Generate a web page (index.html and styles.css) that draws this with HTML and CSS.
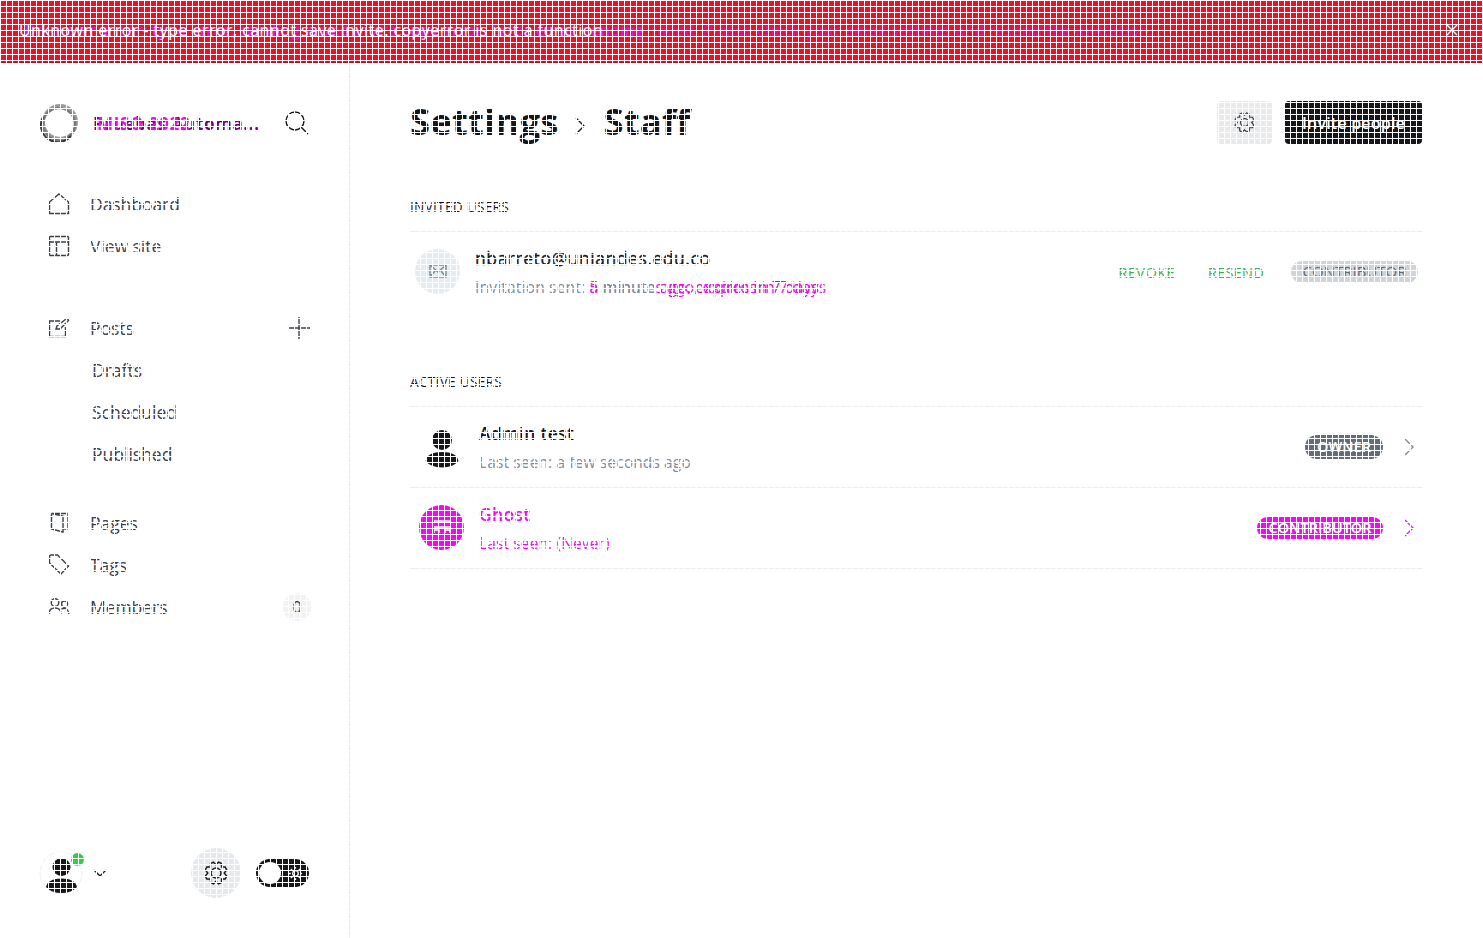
FILE: index.html
```html
<!DOCTYPE html>
<html lang="en">
<head>
<meta charset="utf-8">
<title>Settings - Staff</title>
<link rel="stylesheet" href="styles.css">
</head>
<body>
<div class="banner">
  <div class="banner-text">
    <span class="layer pink"><span class="lead">Unknown error: type error, sending saved invite copy error. Error email sending</span><span class="tail">failed. Please check your email settings and resend the invitation.</span></span>
    <span class="layer white">Unknown error - type error, cannot save invite. copyerror is not a function</span>
  </div>
  <svg class="banner-close" viewBox="0 0 12 12"><path d="M1 1l10 10M11 1L1 11"/></svg>
</div>
<div class="app">
  <aside class="sidebar">
    <header class="site">
      <svg class="site-logo" viewBox="0 0 38 38"><circle cx="20" cy="18" r="16.500" stroke="#999c9e" stroke-width="3"/><circle cx="19" cy="20" r="16" stroke="#777a7c" stroke-width="2.500"/><path d="M3 13a17 17 0 0 0 28 19" stroke="#333638" stroke-width="2"/></svg>
      <div class="site-name"><span class="layer name-a">Pruebas Automa...</span><span class="layer name-b">MISO 2022</span></div>
      <svg class="search" viewBox="0 0 24 24"><circle cx="10" cy="10" r="9"/><path d="M16.500 16.500L23 23"/></svg>
    </header>
    <nav>
      <div class="nav-group">
        <a class="nav-item"><svg viewBox="0 0 22 22"><path d="M1.500 9L11 1l9.500 8v11.500h-19z"/></svg>Dashboard</a>
        <a class="nav-item"><svg viewBox="0 0 22 22"><rect x="1.500" y="1.500" width="19" height="19" rx="1"/><path d="M1.500 7h19M8.500 7v13.500"/></svg>View site</a>
      </div>
      <div class="nav-group posts">
        <a class="nav-item"><svg viewBox="0 0 22 22"><path d="M12 4H1.500v15.500h16V10M8 12l1-3 9-7q2-1 2.500 1.500L12 12z"/></svg>Posts<svg class="plus" viewBox="0 0 22 22"><path d="M11 0v22M0 11h22"/></svg></a>
        <a class="nav-item sub">Drafts</a>
        <a class="nav-item sub">Scheduled</a>
        <a class="nav-item sub">Published</a>
      </div>
      <div class="nav-group">
        <a class="nav-item"><svg viewBox="0 0 22 22"><path d="M3.500 1.500h15.500v15.500h-3.500M3.500 1.500v15.500l11.500 3V4L3.500 1.500"/></svg>Pages</a>
        <a class="nav-item"><svg viewBox="0 0 22 22"><path d="M1.500 2.500q0-1.500 1.500-1.500h6.500l11 11-7.500 8L1.500 9z"/></svg>Tags</a>
        <a class="nav-item"><svg viewBox="0 0 22 22"><circle cx="7" cy="6.500" r="3.800"/><circle cx="16.500" cy="8" r="3"/><path d="M1 18q0-6 6-6t6 6M13.500 13q6-3 7.500 5"/></svg>Members<span class="count">0</span></a>
      </div>
    </nav>
    <footer class="side-foot">
      <div class="me"><svg viewBox="0 0 44 44"><circle class="ring" cx="22" cy="22" r="21"/><circle cx="22.500" cy="16" r="9"/><path d="M7 36q2-8.500 15.500-8.500T38 36q-5.500 6-15.500 6T7 36z"/></svg><i class="dot"></i></div>
      <svg class="caret" viewBox="0 0 14 8"><path d="M1 1l6 6 6-6"/></svg>
      <div class="gear-round"><svg class="gear" viewBox="0 0 24 24"><path d="M9.500 1.200l2.500 2.500 2.500-2.500 3 1.300v3.500h3.700l1.500 3-2.500 3 2.500 3-1.500 3h-3.700v3.500l-3 1.300-2.500-2.500-2.500 2.500-3-1.300V18H2.800l-1.500-3 2.500-3-2.500-3 1.500-3h3.700V2.500z"/><circle cx="12" cy="12" r="5"/></svg></div>
      <div class="toggle"><i></i><svg viewBox="0 0 14 14"><circle cx="7" cy="7" r="3"/><path d="M7 0v2M7 12v2M0 7h2M12 7h2M2 2l1.500 1.500M10.500 10.500L12 12M12 2l-1.500 1.500M3.500 10.500L2 12"/></svg></div>
    </footer>
  </aside>
  <main>
    <header class="head">
      <h1>Settings<svg viewBox="0 0 10 18"><path d="M1 1l8 8-8 8"/></svg>Staff</h1>
      <button class="btn-gear"><svg class="gear" viewBox="0 0 24 24"><path d="M9.500 1.200l2.500 2.500 2.500-2.500 3 1.300v3.500h3.700l1.500 3-2.500 3 2.500 3-1.500 3h-3.700v3.500l-3 1.300-2.500-2.500-2.500 2.500-3-1.300V18H2.800l-1.500-3 2.500-3-2.500-3 1.500-3h3.700V2.500z"/><circle cx="12" cy="12" r="4.500"/></svg></button>
      <button class="btn-invite">Invite people</button>
    </header>
    <section>
      <h2>INVITED USERS</h2>
      <article class="row invited">
        <div class="avatar mail"><svg viewBox="0 0 18 14"><rect x="1" y="1" width="16" height="12"/><path d="M1 1l8 7 8-7M1 13l5-6M17 13l-5-6"/></svg></div>
        <div class="info"><h3 class="email">nbarreto@uniandes.edu.co</h3><p>Invitation sent: <span class="age"><span class="layer older">a <em>minute</em> ago, expires in 7 days</span><span class="layer"><b>5</b> <em>minute</em>s ago, expires in 7 days</span></span></p></div>
        <a class="action revoke">REVOKE</a><a class="action resend">RESEND</a>
        <span class="badge light">CONTRIBUTOR</span>
      </article>
    </section>
    <section class="active">
      <h2>ACTIVE USERS</h2>
      <article class="row">
        <div class="avatar person"><svg viewBox="0 0 46 46"><circle cx="23" cy="17" r="10"/><path d="M6.500 38q2-9 16.500-9t16.500 9q-5.500 6.500-16.500 6.500T6.500 38z"/></svg></div>
        <div class="info"><h3>Admin test</h3><p>Last seen: a few seconds ago</p></div>
        <span class="badge dark">OWNER</span><svg class="chev" viewBox="0 0 10 18"><path d="M1 1l8 8-8 8"/></svg>
      </article>
      <article class="row changed">
        <div class="avatar ghost"><svg viewBox="0 0 16 16"><path d="M0 4V2h16v2M0 8h16M0 14v-3h5v3M16 14v-3h-5v3"/></svg></div>
        <div class="info"><h3>Ghost</h3><p>Last seen: (Never)</p></div>
        <span class="badge magenta">CONTRIBUTOR</span><svg class="chev" viewBox="0 0 10 18"><path d="M1 1l8 8-8 8"/></svg>
      </article>
    </section>
  </main>
</div>
<div class="grid"></div>
</body>
</html>
```
FILE: styles.css
```css
* { box-sizing: border-box; }
body { margin: 0; width: 1483px; height: 938px; overflow: hidden; display: flex; flex-direction: column; background: #fff; color: #15171a; font-family: "Open Sans", "Noto Sans", sans-serif; }
svg { fill: none; stroke: currentColor; stroke-width: 1.4; flex: none; display: block; }
h1, h2, h3, p { margin: 0; }
.grid { position: fixed; inset: 0; z-index: 5; pointer-events: none; background: repeating-linear-gradient(90deg, #fff 0 1px, transparent 1px 6px), repeating-linear-gradient(180deg, #fff 0 1px, transparent 1px 6px); }

.banner { height: 63px; flex: none; display: flex; align-items: center; padding: 0 25px 2px 19px; background: #f50b23; border-bottom: 1px solid #b90819; color: #fff; }
.banner-text { display: grid; flex: 1; font-size: 16px; line-height: 24px; white-space: nowrap; }
.layer { grid-area: 1 / 1; }
.pink { display: flex; color: #f0f; font-weight: 600; padding-left: 5px; }
.lead { width: 628px; letter-spacing: .08px; }
.tail { color: #ff00a0; letter-spacing: -.05px; }
.white { letter-spacing: .45px; }
.banner-close { width: 12px; height: 12px; }

.app { flex: 1; display: flex; min-height: 0; }
.sidebar { width: 350px; flex: none; border-right: 1px solid #e5e7e9; display: flex; flex-direction: column; color: #394047; }
.site { display: flex; align-items: center; height: 38px; margin: 41px 39px 0 40px; color: #15171a; }
.site-logo { width: 38px; height: 38px; }
.site-name { display: grid; width: 180px; margin: 0 12px 0 15px; font-size: 17px; font-weight: 700; white-space: nowrap; }
.name-a { color: #707; letter-spacing: .65px; }
.name-b { color: #f0f; padding-left: 4px; letter-spacing: .6px; }
.search { width: 24px; height: 24px; }
nav { margin-top: 41px; padding-left: 48px; padding-right: 38px; }
.nav-group { margin-bottom: 40px; }
.nav-group.posts { margin-bottom: 27px; }
.nav-item { display: flex; align-items: center; height: 42px; gap: 20px; font-size: 17.500px; letter-spacing: -.05px; }
.nav-item svg { width: 22px; height: 22px; }
.nav-item.sub { padding-left: 44px; letter-spacing: 0; }
.nav-item .plus { margin-left: auto; margin-right: 1px; }
.count { margin-left: auto; width: 28px; height: 28px; border-radius: 50%; background: #f0f2f3; font-size: 16px; line-height: 28px; text-align: center; }
.side-foot { display: flex; align-items: center; height: 50px; margin: auto 40px 40px 39px; color: #15171a; }
.me { position: relative; width: 44px; height: 44px; }
.me svg { width: 44px; height: 44px; fill: #15171a; stroke: none; }
.me .ring { fill: #fff; stroke: #ebeef0; stroke-width: 1; }
.dot { position: absolute; right: -1px; top: 2px; width: 13px; height: 13px; border-radius: 50%; background: #30cf43; }
.caret { width: 14px; height: 8px; margin-left: 10px; }
.gear-round { width: 50px; height: 50px; margin-left: auto; margin-right: 15px; border-radius: 50%; background: #e5e9ed; display: flex; align-items: center; justify-content: center; }
.gear { width: 24px; height: 24px; }
.toggle { width: 53px; height: 28px; border-radius: 14px; background: #15171a; display: flex; align-items: center; gap: 8px; padding: 3px; color: #fff; }
.toggle i { width: 22px; height: 22px; border-radius: 50%; background: #fff; }
.toggle svg { width: 13px; height: 13px; }

main { flex: 1; padding: 37px 61px 0 60px; }
.head { display: flex; height: 44px; align-items: center; }
h1 { flex: 1; display: flex; align-items: center; font-size: 36.500px; line-height: 44px; letter-spacing: .15px; padding-bottom: 2px; }
h1 svg { width: 10px; height: 18px; margin: 9px 18px 0 17px; }
button { height: 43px; border: 0; border-radius: 4px; padding: 0; font: 600 16px "Open Sans", sans-serif; }
.btn-gear { width: 55px; background: #e7e9eb; margin-right: 13px; display: flex; align-items: center; justify-content: center; color: #394047; }
.btn-gear .gear { width: 21px; height: 21px; }
.btn-invite { width: 137px; background: #15171a; color: #fff; letter-spacing: .2px; padding-top: 1px; }
h2 { font-size: 13.700px; font-weight: 400; line-height: 20px; letter-spacing: .25px; }
section { margin-top: 53px; }
section.active { margin-top: 60px; }
h2 { margin-bottom: 14px; }
.row { display: flex; align-items: center; height: 81px; border-top: 1px solid #e9ecee; padding-right: 8px; }
.row:last-child { border-bottom: 1px solid #e9ecee; height: 82px; }
.row.invited { border-bottom: 0; padding-right: 4px; height: 81px; }
.avatar { width: 45px; height: 45px; margin: 0 15px 2px 9px; border-radius: 50%; display: flex; align-items: center; justify-content: center; }
.avatar.mail { margin-left: 5px; background: #e3ecf3; color: #738a94; }
.mail svg { width: 18px; height: 14px; }
.person svg { width: 46px; height: 46px; fill: #15171a; stroke: none; }
.avatar.ghost { background: #f0f; color: #fff; }
.ghost svg { width: 16px; height: 16px; }
.info { flex: 1; white-space: nowrap; padding-top: 2px; }
.info h3 { font-size: 17.500px; font-weight: 600; line-height: 28px; letter-spacing: .3px; }
.info .email { font-weight: 400; letter-spacing: .55px; -webkit-text-stroke: .3px; }
.info p { font-size: 15.500px; line-height: 30px; letter-spacing: .13px; color: #7c8b9a; }
.invited .info p { letter-spacing: .2px; }
.age { display: inline-grid; color: #c0c; vertical-align: top; }
.older { word-spacing: .1px; }
.age .layer + .layer { color: #f0f; }
.age b { font-weight: 400; }
.age em { font-style: normal; color: #7c8b9a; }
.action { color: #30b943; font-size: 15px; }
.revoke { margin-right: 33px; letter-spacing: .1px; }
.resend { margin-right: 27px; }
.badge { height: 22px; border-radius: 11px; font-size: 13.500px; line-height: 21px; text-align: center; }
.badge.light { width: 127px; background: #ced4d9; color: #5d6d7c; font-size: 15px; }
.badge.dark { width: 78px; height: 24px; border-radius: 12px; background: #626d79; color: #fff; font-size: 14.500px; font-weight: 600; line-height: 23px; }
.badge.magenta { width: 126px; background: #f0f; color: #fff; font-size: 14.500px; font-weight: 600; }
.chev { width: 10px; height: 18px; margin-left: 21px; color: #7c8b9a; }
.changed, .changed p, .changed .chev { color: #f0f; }
```
